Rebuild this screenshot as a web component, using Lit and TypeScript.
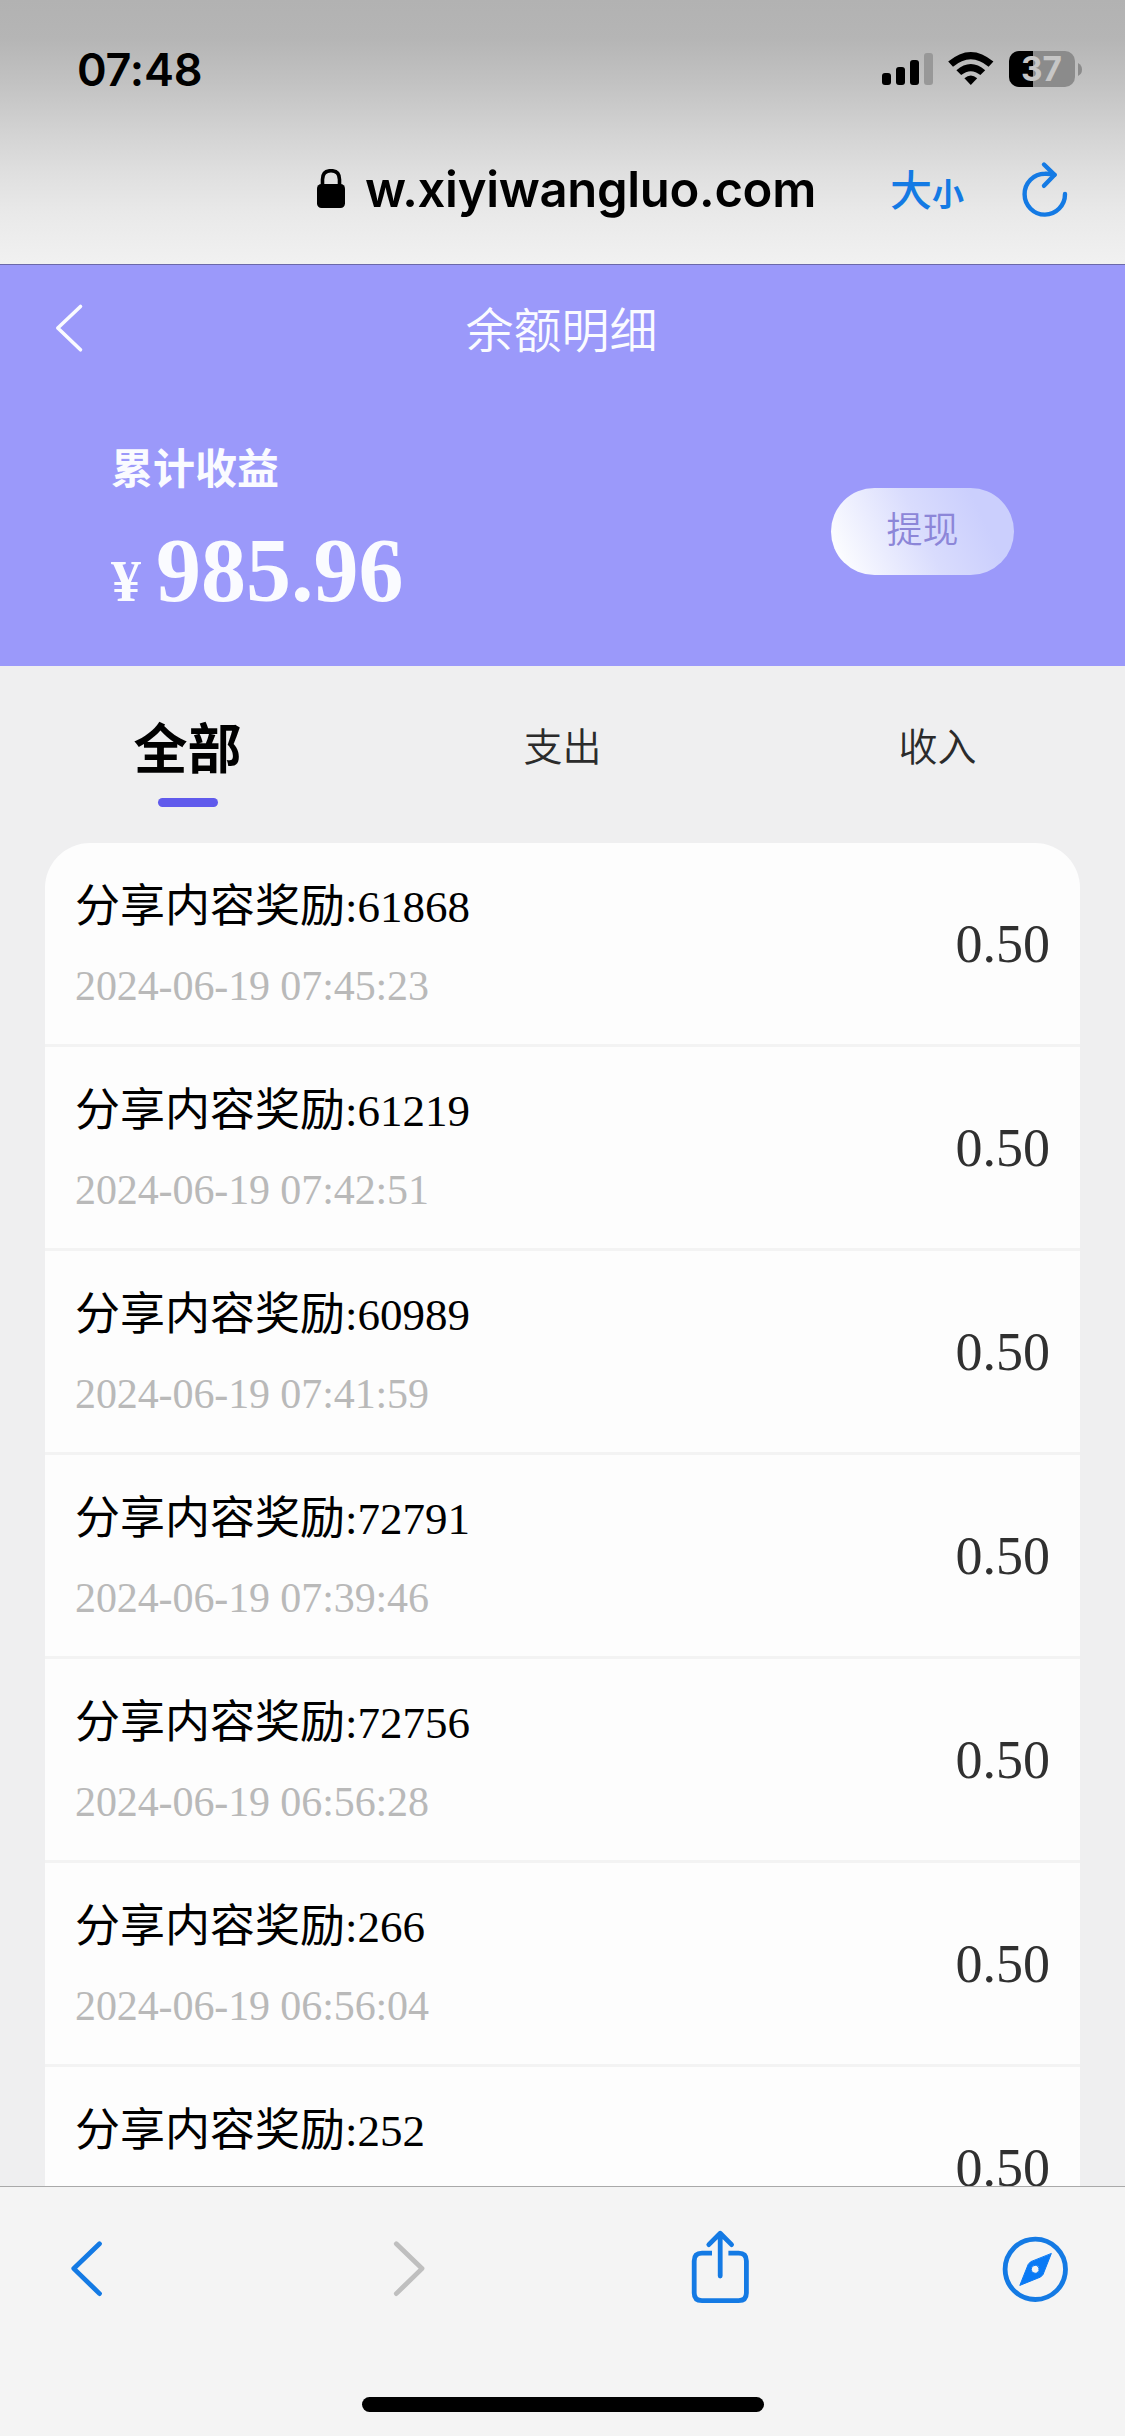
import { LitElement, html, css } from "lit";
import { customElement, property } from "lit/decorators.js";

interface Entry {
  id: string;
  time: string;
  amount: string;
}

const ENTRIES: Entry[] = [
  { id: "61868", time: "2024-06-19 07:45:23", amount: "0.50" },
  { id: "61219", time: "2024-06-19 07:42:51", amount: "0.50" },
  { id: "60989", time: "2024-06-19 07:41:59", amount: "0.50" },
  { id: "72791", time: "2024-06-19 07:39:46", amount: "0.50" },
  { id: "72756", time: "2024-06-19 06:56:28", amount: "0.50" },
  { id: "266", time: "2024-06-19 06:56:04", amount: "0.50" },
  { id: "252", time: "", amount: "0.50" },
];

@customElement("status-bar")
export class StatusBar extends LitElement {
  static styles = css`
    :host {
      display: flex;
      justify-content: space-between;
      height: 138px;
      box-sizing: border-box;
      padding: 42px 42px 0 77px;
      font-family: Inter, "Liberation Sans", sans-serif;
    }
    .clock {
      font-size: 45px;
      line-height: 55px;
      font-weight: 600;
      letter-spacing: -0.2px;
    }
    .icons {
      display: block;
      width: 202px;
      height: 54px;
    }
    .level {
      font-size: 34px;
      font-weight: 700;
      fill: #c6c6c6;
    }
  `;

  render() {
    return html`
      <span class="clock">07:48</span>
      <svg class="icons" viewBox="881 42 202 54">
        <rect x="882" y="73" width="9" height="12" rx="3" />
        <rect x="896" y="67" width="9" height="18" rx="3" />
        <rect x="910" y="60" width="9" height="25" rx="3" />
        <rect x="924" y="53" width="9" height="32" rx="3" fill="#989898" />
        <path d="M948.2 61.6 Q970.8 42.2 993.4 61.6 L988.6 66.8 Q970.8 51.8 953 66.8 Z" />
        <path d="M956.4 70.2 Q970.8 57.8 985.2 70.2 L980.4 75 Q970.8 67.4 961.2 75 Z" />
        <path d="M964.4 78.2 Q970.8 72.6 977.2 78.2 L970.8 85 Z" />
        <clipPath id="cell"><rect x="1009" y="51" width="66" height="36" rx="10" /></clipPath>
        <g clip-path="url(#cell)">
          <rect x="1009" y="51" width="66" height="36" fill="#8b8b8b" />
          <rect x="1009" y="51" width="24" height="36" />
        </g>
        <path d="M1078 63 Q1082 65 1082 69.5 Q1082 74 1078 76 Z" fill="#8b8b8b" />
        <text class="level" x="1021" y="81" textLength="41" lengthAdjust="spacingAndGlyphs">37</text>
      </svg>
    `;
  }
}

@customElement("address-bar")
export class AddressBar extends LitElement {
  static styles = css`
    :host {
      display: flex;
      align-items: flex-start;
      height: 126px;
      padding-left: 317px;
    }
    .lock {
      display: block;
      width: 28px;
      height: 40px;
      margin-top: 31px;
    }
    .url {
      width: 452px;
      margin: 20px 0 0 20px;
      font: 600 49px/64px Inter, "Liberation Sans", sans-serif;
      letter-spacing: -0.3px;
      white-space: nowrap;
    }
    .size {
      display: flex;
      align-items: baseline;
      width: 76px;
      margin: 18px 0 0 73px;
      color: #147ae4;
      font: 500 42px/64px "Noto Sans CJK SC", sans-serif;
    }
    .small {
      font-size: 32px;
      font-weight: 700;
    }
    .reload {
      display: block;
      width: 48px;
      height: 58px;
      margin: 22px 0 0 55px;
      fill: none;
      stroke: #147ae4;
      stroke-width: 4.4;
      stroke-linecap: round;
      stroke-linejoin: round;
    }
  `;

  render() {
    return html`
      <svg class="lock" viewBox="317 169 28 40">
        <rect x="317" y="184" width="28" height="24" rx="4.5" />
        <path d="M322.5 186 V179.5 Q322.5 170.7 331 170.7 Q339.5 170.7 339.5 179.5 V186" fill="none" stroke="#000" stroke-width="3.6" />
      </svg>
      <span class="url">w.xiyiwangluo.com</span>
      <span class="size">大<span class="small">小</span></span>
      <svg class="reload" viewBox="1021 160 48 58">
        <path d="M1065 194 A20.2 20.4 0 1 1 1044.8 173.8 Q1050 173.6 1054.6 174.8" />
        <path d="M1044 164.5 L1054.6 174.8 L1044 185.8" />
      </svg>
    `;
  }
}

@customElement("balance-header")
export class BalanceHeader extends LitElement {
  static styles = css`
    :host {
      display: block;
      box-sizing: border-box;
      height: 402px;
      border-top: 1px solid #6b69a8;
      background: #9b99fa;
      color: #fafbff;
      font-family: "Liberation Serif", "Noto Sans CJK SC", serif;
    }
    .nav {
      display: grid;
      grid-template-columns: 84px 1fr 84px;
      align-items: center;
      height: 131px;
    }
    .back {
      display: block;
      width: 30px;
      height: 50px;
      margin: 0 0 5px 54px;
      fill: none;
      stroke: #fafbff;
      stroke-width: 3.6;
      stroke-linecap: round;
      stroke-linejoin: round;
    }
    .title {
      padding: 0 2px 8px 0;
      text-align: center;
      font-family: "Noto Sans CJK SC", sans-serif;
      font-size: 48px;
      font-weight: 350;
      line-height: 60px;
    }
    .summary {
      display: flex;
      justify-content: space-between;
      padding: 40px 111px 0 111px;
    }
    .label {
      font-family: "Noto Sans CJK SC", sans-serif;
      font-size: 42px;
      font-weight: 600;
      line-height: 60px;
    }
    .total {
      display: flex;
      align-items: baseline;
      gap: 15px;
      margin-top: 25px;
      font-weight: 700;
      font-size: 90px;
      line-height: 100px;
    }
    .unit {
      font-size: 60px;
    }
    .withdraw {
      width: 183px;
      height: 87px;
      margin-top: 52px;
      padding: 0 0 9px;
      border: 0;
      border-radius: 44px;
      background: linear-gradient(65deg, #fbfcff 8%, #d9dcfd 50%, #cbcffd 80%);
      color: #8c86d8;
      font: 350 36px/50px "Noto Sans CJK SC", sans-serif;
    }
  `;

  render() {
    return html`
      <div class="nav">
        <svg class="back" viewBox="54 303 30 50"><path d="M80.5 306.5 L57.8 328 L80.5 349.8" /></svg>
        <div class="title">余额明细</div>
      </div>
      <div class="summary">
        <div>
          <div class="label">累计收益</div>
          <div class="total"><span class="unit">¥</span><span>985.96</span></div>
        </div>
        <button class="withdraw">提现</button>
      </div>
    `;
  }
}

@customElement("entry-tabs")
export class EntryTabs extends LitElement {
  static styles = css`
    :host {
      display: grid;
      grid-template-columns: repeat(3, 1fr);
      height: 177px;
      font-family: "Noto Sans CJK SC", sans-serif;
      color: #2b2b2b;
    }
    .tab {
      display: flex;
      flex-direction: column;
      align-items: center;
      padding-top: 38px;
      font-size: 39px;
      font-weight: 350;
      line-height: 80px;
    }
    .active {
      padding-top: 40px;
      color: #000;
      font-size: 54px;
      font-weight: 700;
    }
    .active::after {
      content: "";
      width: 60px;
      height: 9px;
      margin-top: 12px;
      border-radius: 5px;
      background: #605aec;
    }
  `;

  render() {
    return html`
      <div class="tab active">全部</div>
      <div class="tab">支出</div>
      <div class="tab">收入</div>
    `;
  }
}

@customElement("entry-row")
export class EntryRow extends LitElement {
  @property({ attribute: false }) entry!: Entry;

  static styles = css`
    :host {
      display: flex;
      align-items: center;
      justify-content: space-between;
      box-sizing: border-box;
      height: 204px;
      padding: 0 30px;
      border-bottom: 3px solid #f3f3f3;
      font-family: "Liberation Serif", "Noto Sans CJK SC", serif;
    }
    .text {
      padding-top: 2px;
    }
    .name {
      font-size: 45px;
      line-height: 66px;
      color: #000;
    }
    .time {
      height: 60px;
      margin-top: 16px;
      font-size: 42px;
      line-height: 60px;
      letter-spacing: -0.1px;
      color: #b9b9b9;
    }
    .amount {
      font-size: 54px;
      line-height: 64px;
      color: #303030;
    }
  `;

  render() {
    return html`
      <div class="text">
        <div class="name">分享内容奖励:${this.entry.id}</div>
        <div class="time">${this.entry.time}</div>
      </div>
      <div class="amount">${this.entry.amount}</div>
    `;
  }
}

@customElement("browser-toolbar")
export class BrowserToolbar extends LitElement {
  static styles = css`
    :host {
      display: flex;
      flex-direction: column;
      align-items: center;
      justify-content: space-between;
      box-sizing: border-box;
      height: 250px;
      padding-bottom: 24px;
      border-top: 1px solid #a9a9a9;
      background: #f4f4f4;
    }
    .actions {
      display: grid;
      grid-template-columns: 322px 298px 311px 68px;
      align-items: center;
      box-sizing: border-box;
      width: 100%;
      height: 161px;
      padding-left: 70px;
    }
    .icon {
      display: block;
      height: 80px;
      fill: none;
      stroke: #147ae4;
      stroke-width: 4.8;
      stroke-linecap: round;
      stroke-linejoin: round;
    }
    .chevron {
      width: 34px;
    }
    .forward {
      stroke: #bfbfbf;
    }
    .share {
      width: 60px;
    }
    .compass {
      width: 68px;
    }
    .home {
      width: 402px;
      height: 15px;
      border-radius: 8px;
      background: #000;
    }
  `;

  render() {
    return html`
      <div class="actions">
        <svg class="icon chevron" viewBox="70 2227 34 80"><path d="M99.5 2242.8 L73.8 2267.6 L99.5 2292.6" /></svg>
        <svg class="icon chevron forward" viewBox="392 2227 34 80"><path d="M396.3 2242.8 L422 2267.6 L396.3 2292.6" /></svg>
        <svg class="icon share" viewBox="690 2227 60 80">
          <path d="M712 2252.2 H702 Q694.2 2252.2 694.2 2260 V2292 Q694.2 2299.6 702 2299.6 H738.6 Q746.4 2299.6 746.4 2292 V2260 Q746.4 2252.2 738.6 2252.2 H728.4" stroke-linecap="butt" />
          <path d="M720.2 2275 V2232.5 M708.8 2243.6 L720.2 2232.2 L731.6 2243.6" />
        </svg>
        <svg class="icon compass" viewBox="1001 2227 68 80">
          <circle cx="1035.3" cy="2268.3" r="30.2" />
          <path d="M1051.2 2252.8 L1043 2273.6 L1040.6 2276 L1019.8 2284.4 L1028.2 2263.4 L1030.4 2261 Z M1039.2 2268.3 A4 4 0 1 0 1031.2 2268.3 A4 4 0 1 0 1039.2 2268.3 Z" fill="#0a7af5" fill-rule="evenodd" stroke="#0a7af5" stroke-width="1" />
        </svg>
      </div>
      <div class="home"></div>
    `;
  }
}

@customElement("app-root")
export class AppRoot extends LitElement {
  static styles = css`
    :host {
      display: flex;
      flex-direction: column;
      width: 1125px;
      height: 2436px;
      overflow: hidden;
      background: #efeff0;
    }
    .chrome {
      flex: none;
      background: linear-gradient(
        #b2b2b2 0,
        #b5b5b5 38px,
        #c2c2c2 83px,
        #d2d2d2 130px,
        #dfdfdf 172px,
        #e9e9e9 213px,
        #efefef 250px,
        #f1f1f1 264px
      );
    }
    .header,
    .tabs,
    .toolbar {
      flex: none;
    }
    .viewport {
      flex: 1;
      min-height: 0;
      overflow: hidden;
    }
    .card {
      margin: 0 45px;
      border-radius: 45px;
      background: #fdfdfd;
    }
  `;

  render() {
    return html`
      <div class="chrome">
        <status-bar></status-bar>
        <address-bar></address-bar>
      </div>
      <balance-header class="header"></balance-header>
      <entry-tabs class="tabs"></entry-tabs>
      <div class="viewport">
        <div class="card">
          ${ENTRIES.map((entry) => html`<entry-row .entry=${entry}></entry-row>`)}
        </div>
      </div>
      <browser-toolbar class="toolbar"></browser-toolbar>
    `;
  }
}
